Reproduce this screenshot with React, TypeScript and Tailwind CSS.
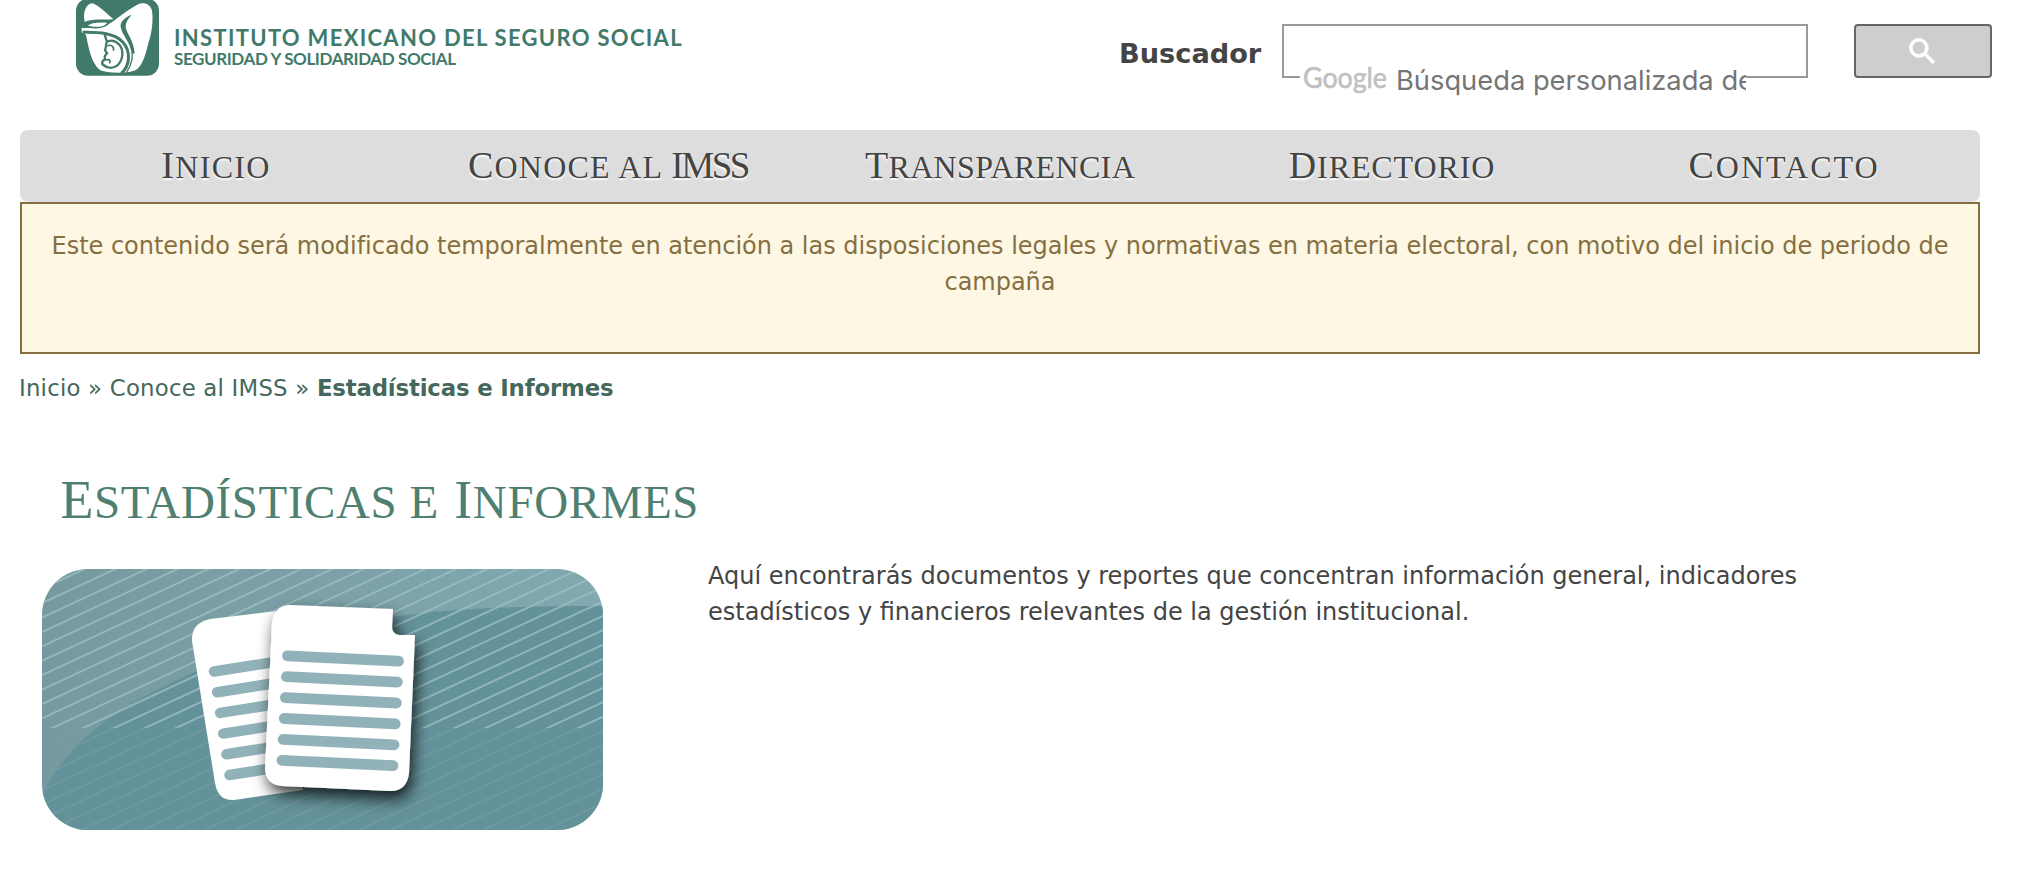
import type { ReactNode } from "react";

function Emblem() {
  return (
    <svg className="block h-[90px] w-[120px] shrink-0" viewBox="0 0 360 270">
      <rect x="48" y="-4" width="249" height="231" rx="36" fill="#41796a" />
      <path d="M73 58C69 38 78 12 96 10C114 14 142 42 160 58C130 60 94 56 74 66Z" fill="#fff" />
      <path
        d="M65 84C90 84 120 86 138 78C168 60 200 30 236 12C254 6 272 14 276 32C280 60 276 96 266 126C256 168 246 200 226 211C206 220 150 220 124 212C96 196 86 146 78 104L65 97Z"
        fill="#fff"
      />
      <path
        d="M80 76C94 64 118 64 146 66C140 78 126 83 108 83C96 83 86 81 80 76Z"
        fill="#fff"
        stroke="#41796a"
        strokeWidth="5"
      />
      <path
        d="M215 44C194 52 180 66 182 80C186 106 210 124 217 162L224 160C222 124 200 100 197 82C197 66 205 56 215 44Z"
        fill="#41796a"
      />
      <path d="M68 97C120 96 164 100 188 126C212 152 212 196 184 220" fill="none" stroke="#41796a" strokeWidth="9" />
      <path d="M212 140C222 164 216 194 200 216" fill="none" stroke="#41796a" strokeWidth="4" />
      <path
        d="M134 104L141 126C136 134 140 140 135 150L141 160C134 166 132 172 136 178C124 182 124 192 132 196C142 206 160 206 172 196C190 180 192 150 178 134C168 124 154 120 144 124"
        fill="none"
        stroke="#41796a"
        strokeWidth="7"
      />
      <path
        d="M142 138C152 132 164 140 160 152M138 180C150 176 154 184 148 190"
        fill="none"
        stroke="#41796a"
        strokeWidth="5"
      />
    </svg>
  );
}

function SearchIcon() {
  return (
    <svg className="ml-[-1px] size-[35px]" viewBox="0 0 24 24" fill="#fff" stroke="#fff" strokeWidth="0.5">
      <path d="M15.5 14h-.79l-.28-.27A6.471 6.471 0 0 0 16 9.5 6.5 6.5 0 1 0 9.5 16c1.61 0 3.09-.59 4.23-1.57l.27.28v.79l5 4.99L20.49 19l-4.99-5zm-6 0C7.01 14 5 11.99 5 9.5S7.01 5 9.5 5 14 7.01 14 9.5 11.99 14 9.5 14z" />
    </svg>
  );
}

const STRIPES = Array.from({ length: 42 }, (_, i) => -9 + i * 14.4);
const ROWS = [0, 1, 2, 3, 4, 5];

function DocumentsBanner() {
  return (
    <svg className="block h-[261px] w-[561px] shrink-0" viewBox="0 0 561 261">
      <defs>
        <clipPath id="card">
          <rect width="561" height="261" rx="46" />
        </clipPath>
        <clipPath id="upper">
          <rect width="561" height="159" />
        </clipPath>
        <clipPath id="lower">
          <rect y="159" width="561" height="102" />
        </clipPath>
        <clipPath id="backPage">
          <path d="M168 50L234 42L261 221L192 231Q176 232 173 214L150 72Q149 54 168 50Z" />
        </clipPath>
        <linearGradient id="sheen" x1="0" y1="0" x2="1" y2="0">
          <stop offset="0" stopColor="#75999f" />
          <stop offset="1" stopColor="#82a9b0" />
        </linearGradient>
        <filter id="shadow" x="-30%" y="-30%" width="170%" height="170%">
          <feDropShadow dx="3" dy="8" stdDeviation="8" floodColor="#000" floodOpacity="0.8" />
        </filter>
      </defs>
      <g clipPath="url(#card)">
        <rect width="561" height="261" fill="url(#sheen)" />
        <path d="M0 225C25 178 60 147 131 113C205 78 285 55 372 45C435 38 500 37 561 37V261H0Z" fill="#64929a" />
        <g clipPath="url(#upper)" stroke="#9dbec2" strokeWidth="2" opacity="0.8">
          {STRIPES.map((y) => (
            <line key={y} x1="0" y1={y} x2="561" y2={y - 261} />
          ))}
        </g>
        <g clipPath="url(#lower)" stroke="#76a1a5" strokeWidth="2" opacity="0.55">
          {STRIPES.map((y) => (
            <line key={y} x1="0" y1={y} x2="561" y2={y - 261} />
          ))}
        </g>
        <g clipPath="url(#backPage)">
          <rect x="140" y="30" width="130" height="210" fill="#fff" />
          {ROWS.map((i) => (
            <path
              key={i}
              d={`M${172 + i * 3.1} ${102.5 + i * 20.7}l70 -11`}
              stroke="#92b2b9"
              strokeWidth="10.5"
              strokeLinecap="round"
            />
          ))}
        </g>
        <path
          filter="url(#shadow)"
          d="M247 36L351 40L350 59Q351 65 357 66L373 66L367 204Q365 222 348 222L240 217Q223 215 223 199L230 54Q232 37 247 36Z"
          fill="#fff"
        />
        {ROWS.map((i) => (
          <path
            key={i}
            d={`M${245.5 - i * 1.1} ${86.8 + i * 20.9}l111 5.4`}
            stroke="#92b2b9"
            strokeWidth="10.8"
            strokeLinecap="round"
          />
        ))}
      </g>
    </svg>
  );
}

function NavItem({ children }: { children: ReactNode }) {
  return (
    <a className="flex-1 text-center text-[32px] leading-[71px] whitespace-nowrap [text-shadow:0_2px_2px_#fff]">
      {children}
    </a>
  );
}

function Cap({ children }: { children: ReactNode }) {
  return <span className="text-[38px]">{children}</span>;
}

export default function App() {
  return (
    <div className="h-[886px] w-[2020px] overflow-hidden bg-white font-['DejaVu_Sans',sans-serif] text-[24px] leading-[36px] text-[#444]">
      <header className="flex h-[130px] items-start pl-[60px]">
        <Emblem />
        <div className="ml-[-6px] w-[944px] pt-[27px] font-['Lato',sans-serif] font-bold whitespace-nowrap text-[#41796a]">
          <div className="text-[22px] leading-[22px] tracking-[1.3px]">INSTITUTO MEXICANO DEL SEGURO SOCIAL</div>
          <div className="text-[17px] leading-[20px] tracking-[-0.4px]">SEGURIDAD Y SOLIDARIDAD SOCIAL</div>
        </div>
        <label className="w-[164px] pt-[27px] pl-px text-[27.2px] leading-[54px] font-bold">Buscador</label>
        <div className="relative mt-[24px] h-[54px] w-[526px] border-2 border-[#999]">
          <div className="absolute top-[35px] left-[16px] flex h-[40px] w-[446px] items-start overflow-hidden bg-white">
            <svg className="h-[40px] w-[96px] shrink-0" viewBox="0 0 96 40">
              <text
                x="3"
                y="26.5"
                textLength="84"
                lengthAdjust="spacingAndGlyphs"
                className="fill-[#c0c0c0] stroke-[#c0c0c0] stroke-[0.6px] font-['Lato',sans-serif] text-[29px]"
              >
                Google
              </text>
            </svg>
            <span className="font-['Inter',sans-serif] text-[27.3px] leading-[40px] whitespace-nowrap text-[#757575]">
              Búsqueda personalizada de
            </span>
          </div>
        </div>
        <button className="mt-[24px] ml-[46px] flex h-[54px] w-[138px] items-center justify-center rounded-[4px] border-2 border-[#666] bg-[#cecece]">
          <SearchIcon />
        </button>
      </header>

      <nav className="ml-[20px] flex h-[72px] w-[1960px] rounded-[8px] bg-[#ddd] font-['Liberation_Serif',serif]">
        <NavItem>
          <span className="tracking-[1.3px]"><Cap>I</Cap>NICIO</span>
        </NavItem>
        <NavItem>
          <span className="tracking-[1.2px]"><Cap>C</Cap>ONOCE AL </span>
          <span className="text-[37px] tracking-[-2.4px]">IMSS</span>
        </NavItem>
        <NavItem>
          <span className="tracking-[0.35px]"><Cap>T</Cap>RANSPARENCIA</span>
        </NavItem>
        <NavItem>
          <span className="tracking-[0.9px]"><Cap>D</Cap>IRECTORIO</span>
        </NavItem>
        <NavItem>
          <span className="tracking-[2px]"><Cap>C</Cap>ONTACTO</span>
        </NavItem>
      </nav>

      <div className="ml-[20px] h-[152px] w-[1960px] border-2 border-[#866f41] bg-[#fdf7e4] px-[20px] pt-[24px] text-center tracking-[-0.02px] text-[#866f41]">
        Este contenido será modificado temporalmente en atención a las disposiciones legales y normativas en materia
        electoral, con motivo del inicio de periodo de campaña
      </div>

      <div className="mt-[16px] pl-[19px] text-[22.8px] whitespace-nowrap text-[#44685b]">
        <span className="tracking-[0.22px]">Inicio » Conoce al IMSS » </span>
        <b className="tracking-[-0.15px]">Estadísticas e Informes</b>
      </div>

      <h1 className="mt-[58px] pl-[60.5px] font-['Liberation_Serif',serif] text-[47px] leading-[72px] tracking-[0.6px] whitespace-nowrap text-[#4f7f70]">
        <span className="text-[54px]">E</span>STADÍSTICAS E{" "}
        <span className="ml-[3px] text-[54px]">I</span>NFORMES
      </h1>

      <main className="mt-[20px] flex items-start pl-[42px]">
        <div className="pt-[11px]">
          <DocumentsBanner />
        </div>
        <p className="ml-[105px] w-[1120px]">
          Aquí encontrarás documentos y reportes que concentran información general, indicadores estadísticos y
          financieros relevantes de la gestión institucional.
        </p>
      </main>
    </div>
  );
}
